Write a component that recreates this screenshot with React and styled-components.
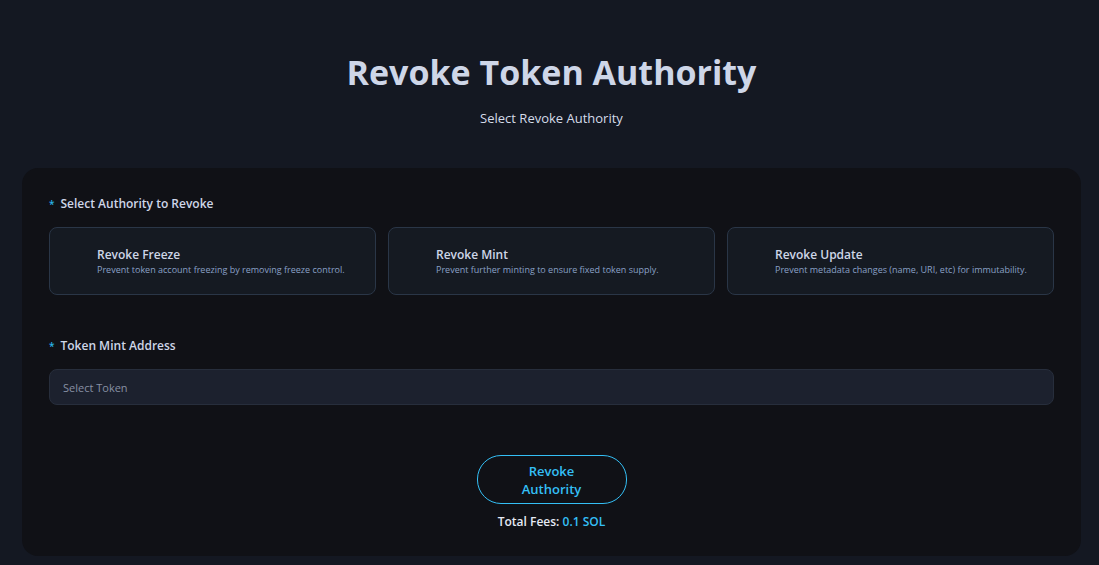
import React, { useState } from "react";
import styled, { createGlobalStyle } from "styled-components";

const GlobalStyle = createGlobalStyle`
  *, *::before, *::after { box-sizing: border-box; }
  body {
    margin: 0;
    background: #141822;
    color: #d1d9e9;
    font-family: "Segoe UI", "Open Sans", "Noto Sans", sans-serif;
  }
  button, input { font-family: inherit; }
`;

const Page = styled.main`
  min-height: 100vh;
  padding: 48px 18px 9px 22px;
`;

const Header = styled.header`
  text-align: center;
  margin-bottom: 40px;
`;

const Title = styled.h1`
  margin: 0 0 12px;
  font-size: 34px;
  font-weight: 700;
  line-height: 48px;
  color: #ced6e8;
`;

const Subtitle = styled.p`
  margin: 0;
  font-size: 13px;
  line-height: 20px;
  color: #d5dcea;
`;

const Panel = styled.form`
  display: flex;
  flex-direction: column;
  align-items: center;
  padding: 26px 27px 24px;
  border-radius: 16px;
  background: #101116;
`;

const Field = styled.div`
  width: 100%;
  margin-bottom: ${({ $gap }) => $gap}px;
`;

const Label = styled.label`
  display: flex;
  gap: 6px;
  margin-bottom: 13px;
  font-size: 12px;
  font-weight: 600;
  line-height: 20px;
  color: #ced6e8;
`;

const Required = styled.span`
  color: #29b3e8;
  font-size: 10px;
  font-weight: 600;
`;

const Options = styled.div`
  display: grid;
  grid-template-columns: repeat(3, 1fr);
  gap: 12px;
`;

const Option = styled.button`
  height: 68px;
  padding: 0 12px 0 47px;
  border: 1px solid ${({ $active }) => ($active ? "#38c4f6" : "#2a3647")};
  border-radius: 8px;
  background: #151a22;
  text-align: left;
  cursor: pointer;
`;

const OptionName = styled.span`
  display: block;
  font-size: 12px;
  font-weight: 600;
  line-height: 16px;
  color: #ced6e8;
`;

const OptionNote = styled.span`
  display: block;
  font-size: 9px;
  line-height: 13px;
  color: #8aa0c6;
  white-space: nowrap;
`;

const TokenInput = styled.input`
  display: block;
  width: 100%;
  height: 36px;
  padding: 0 13px;
  border: 1px solid #272e3c;
  border-radius: 8px;
  background: #1c212e;
  color: #ced6e8;
  font-size: 11px;
  &::placeholder { color: #8790a3; opacity: 1; }
`;

const Submit = styled.button`
  width: 150px;
  padding: 6px 32px 5px;
  border: 1px solid #34bff5;
  border-radius: 24px;
  background: transparent;
  color: #34bff5;
  font-size: 13px;
  font-weight: 600;
  line-height: 18px;
  cursor: pointer;
`;

const Fees = styled.p`
  margin: 8px 0 0;
  font-size: 12px;
  font-weight: 600;
  line-height: 20px;
  color: #e5eaf4;
`;

const Amount = styled.span`
  color: #34bff5;
`;

const authorities = [
  { name: "Revoke Freeze", note: "Prevent token account freezing by removing freeze control." },
  { name: "Revoke Mint", note: "Prevent further minting to ensure fixed token supply." },
  { name: "Revoke Update", note: "Prevent metadata changes (name, URI, etc) for immutability." },
];

export default function App() {
  const [selected, setSelected] = useState(null);

  return (
    <>
      <GlobalStyle />
      <Page>
        <Header>
          <Title>Revoke Token Authority</Title>
          <Subtitle>Select Revoke Authority</Subtitle>
        </Header>
        <Panel onSubmit={(event) => event.preventDefault()}>
          <Field $gap={41}>
            <Label as="div" id="authority-label">
              <Required>*</Required>
              Select Authority to Revoke
            </Label>
            <Options role="group" aria-labelledby="authority-label">
              {authorities.map(({ name, note }) => (
                <Option
                  key={name}
                  type="button"
                  $active={selected === name}
                  aria-pressed={selected === name}
                  onClick={() => setSelected(name)}
                >
                  <OptionName>{name}</OptionName>
                  <OptionNote>{note}</OptionNote>
                </Option>
              ))}
            </Options>
          </Field>
          <Field $gap={50}>
            <Label htmlFor="token">
              <Required>*</Required>
              Token Mint Address
            </Label>
            <TokenInput id="token" type="text" placeholder="Select Token" />
          </Field>
          <Submit type="submit">Revoke Authority</Submit>
          <Fees>
            Total Fees: <Amount>0.1 SOL</Amount>
          </Fees>
        </Panel>
      </Page>
    </>
  );
}
